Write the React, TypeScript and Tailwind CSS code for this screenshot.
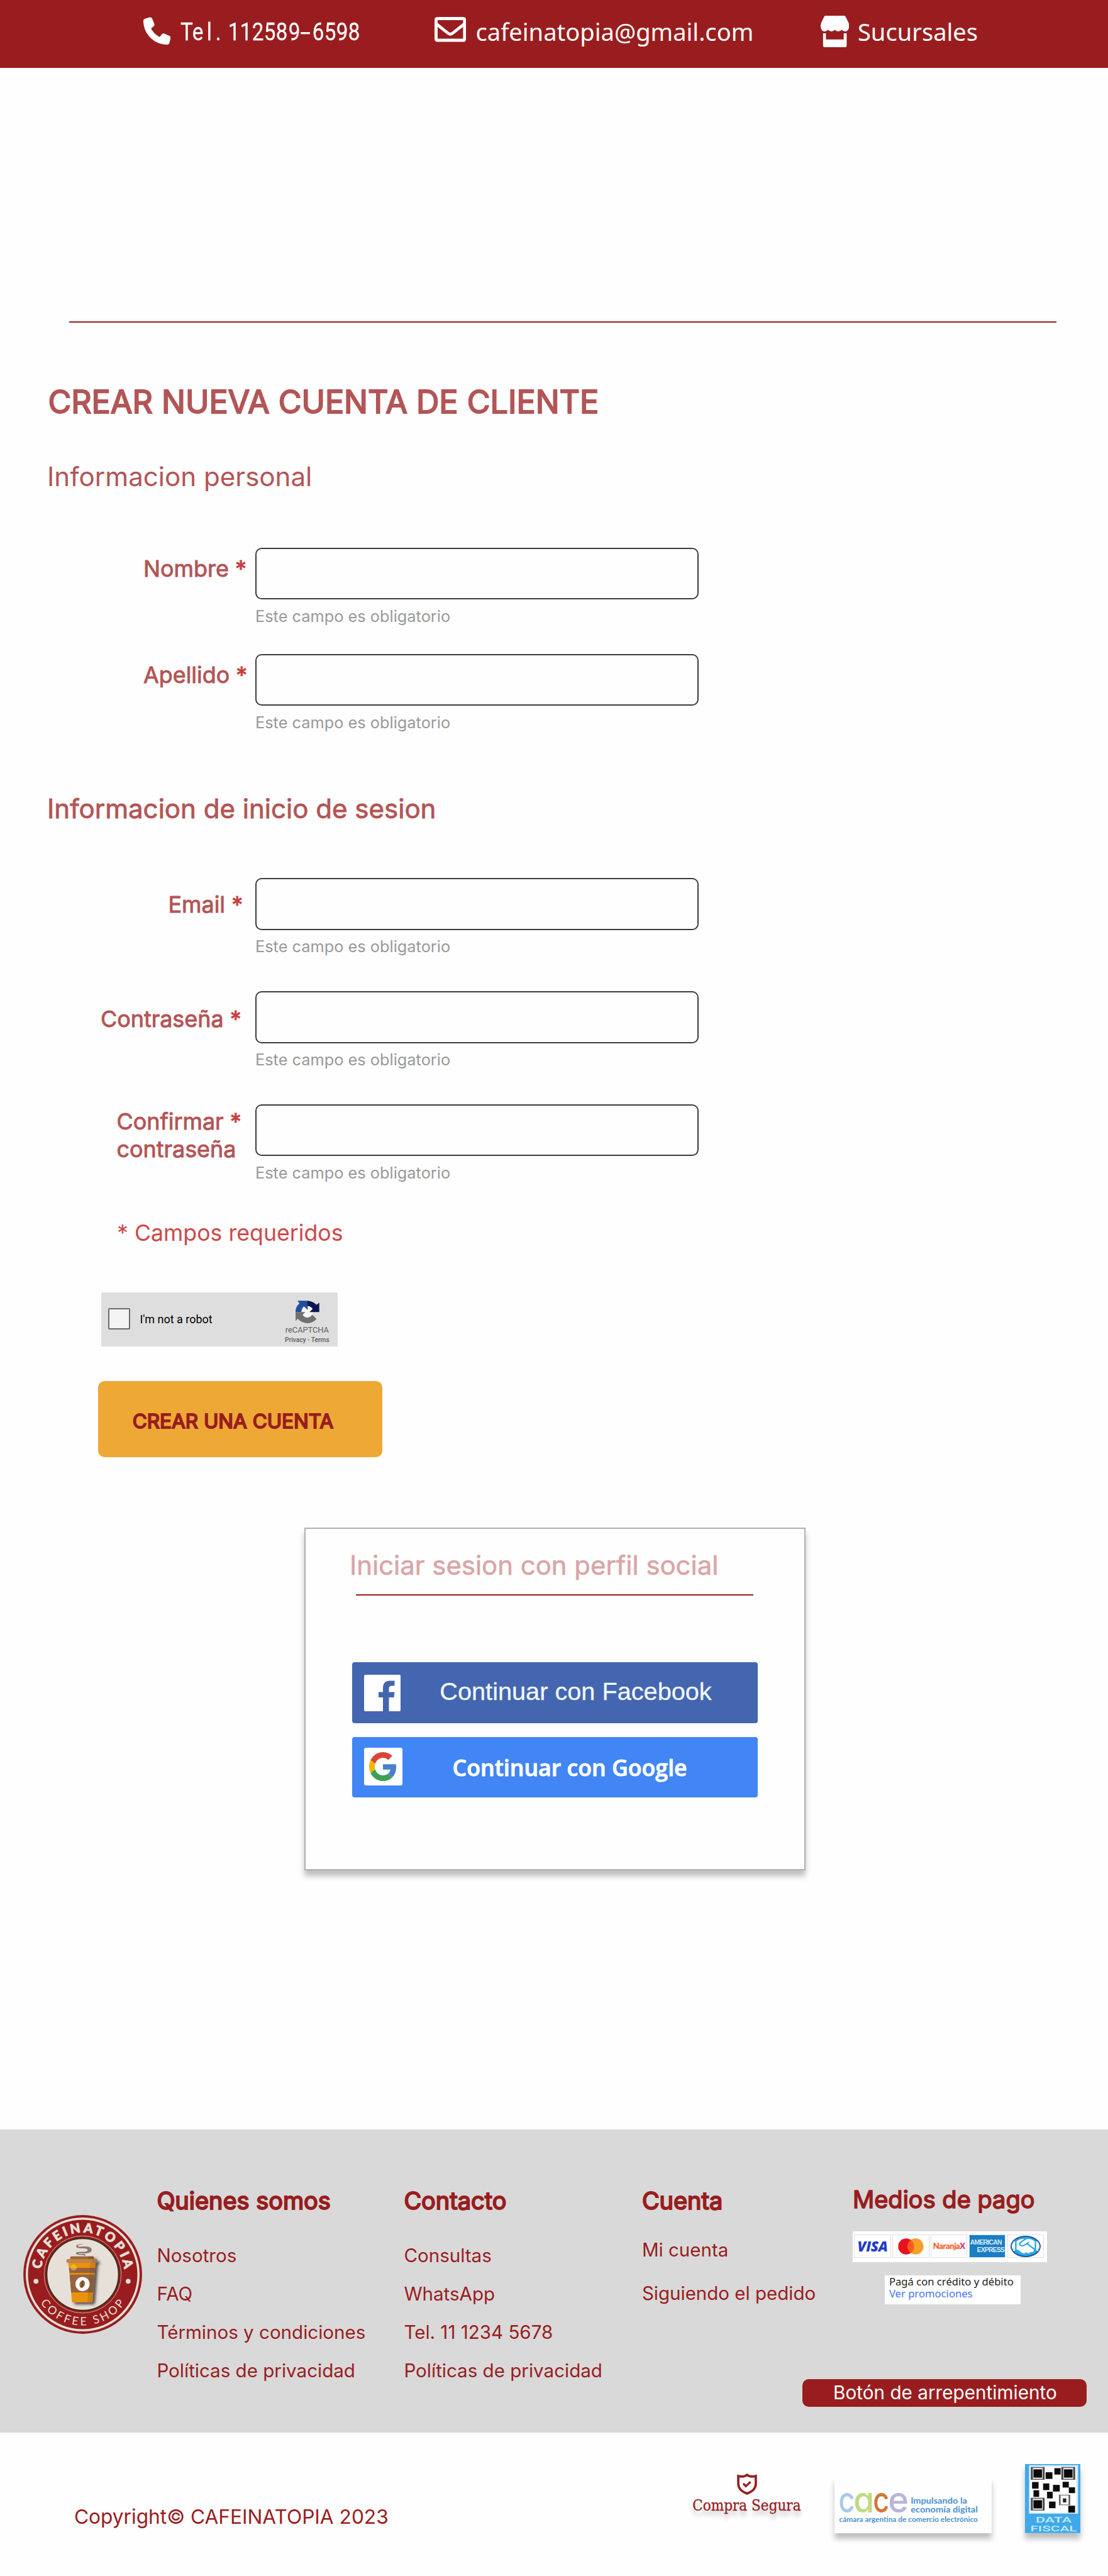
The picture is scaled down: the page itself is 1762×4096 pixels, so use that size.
import type { ReactNode } from 'react';
import { FaPhone, FaHandshake } from 'react-icons/fa6';

const PHONE = 'Tel.112589-6598';

function MailIcon() {
  return (
    <svg viewBox="0 0 95 75" className="h-[39.6px] w-[50.2px]" fill="white">
      <path
        fillRule="evenodd"
        d="M9 0H86Q95 0 95 9V66Q95 75 86 75H9Q0 75 0 66V9Q0 0 9 0ZM9.3 9.5V18L42 44.5Q47.5 49 53 44.5L86 18V9.5ZM9.3 30V65.5H86V30L55.5 53.5Q47.5 59 39.5 53.5Z"
      />
    </svg>
  );
}

function StoreIcon() {
  return (
    <svg viewBox="0 0 86 95" className="h-[50.2px] w-[45.4px]" fill="white">
      <path d="M15 0H71Q73.500 0 75 2.500L83 18.500Q86 24.500 86 31C86 41 80 47.500 73.500 47.500Q67.500 47.500 63.300 42Q59 47.500 53 47.500Q47 47.500 42.700 42Q38.500 47.500 32.500 47.500Q26.500 47.500 22.700 42Q18 47.500 12.500 47.500C5.500 47.500 0 41 0 31Q0 24.500 3 18.500L11 2.500Q12.500 0 15 0Z" />
      <path d="M7.300 52.300Q11.500 53.500 16 52.500V71.300H69.500V52.500Q74 53.500 78.500 52.300V90Q78.500 95 73.500 95H12.300Q7.300 95 7.300 90Z" />
    </svg>
  );
}

function Header() {
  return (
    <header className="flex h-[108px] bg-[#991D1E] text-white">
      <FaPhone className="mt-[27px] ml-[227.600px] h-[44.500px] w-[43.500px] shrink-0" />
      <p className="mt-[28px] ml-[14px] flex w-[286px] font-['Roboto'] text-[39.500px] leading-[46px] [-webkit-text-stroke:0.300px_white]">
        {PHONE.split('').map((c, i) => (
          <span key={i} className={c === '.' ? 'w-[19.050px] pr-[9px] text-center' : 'w-[19.050px] text-center'}>
            <span className={c === '-' ? 'inline-block scale-x-[1.500]' : 'inline-block origin-center scale-x-[0.840]'}>{c}</span>
          </span>
        ))}
      </p>
      <div className="mt-[27px] ml-[119.800px]">
        <MailIcon />
      </div>
      <p className="mt-[23px] ml-[15.500px] w-[442px] font-['Noto_Sans'] text-[38.100px] leading-[54px] whitespace-nowrap">cafeinatopia@gmail.com</p>
      <div className="mt-[24.800px] ml-[106px]">
        <StoreIcon />
      </div>
      <p className="mt-[23px] ml-[14px] font-['Noto_Sans'] text-[38.100px] leading-[54px]">Sucursales</p>
    </header>
  );
}

function Field({ label }: { label: ReactNode }) {
  return (
    <div className="flex h-[124px]">
      <div className="w-[406px] shrink-0 text-[35.900px] leading-[44px] whitespace-nowrap text-[#B35556] [-webkit-text-stroke:0.900px_#B35556]">{label}</div>
      <div>
        <div className="h-[82.500px] w-[705px] rounded-[10px] border-2 border-[#3C3C3C]" />
        <p className="mt-[11.500px] text-[25.350px] leading-[30px] text-[#999999]">Este campo es obligatorio</p>
      </div>
    </div>
  );
}

function Star() {
  return <span className="text-[#C74041] [-webkit-text-stroke:0.900px_#C74041]">*</span>;
}

function RecaptchaLogo() {
  return (
    <svg viewBox="1000 578 117 132" preserveAspectRatio="none" className="h-[37.800px] w-[39.400px]">
      <path fill="#fff" d="M1035 612L1084 612L1084 665Q1058 692 1035 665Z" opacity="0.7" />
      <path fill="#1F4F9E" d="M1012 582H1060V634L1043 614Q1031 626 1030 645H1003Q1003 612 1022 598Z" />
      <path fill="#0C1650" d="M1059 582Q1086 584 1102 605L1115 593V645H1069L1084 628Q1074 612 1059 611Z" />
      <path fill="#717171" d="M1003 645H1049L1036 661Q1058 692 1082 660L1102 684Q1085 708 1057 707Q1032 706 1014 683L1003 694Z" />
    </svg>
  );
}

function GoogleG() {
  return (
    <svg viewBox="0 0 48 48" preserveAspectRatio="none" className="h-[46px] w-[44px]">
      <path fill="#DB4437" d="M24 9.500c3.540 0 6.710 1.220 9.210 3.600l6.850-6.850C35.900 2.380 30.470 0 24 0 14.620 0 6.510 5.380 2.560 13.220l7.980 6.190C12.430 13.720 17.740 9.500 24 9.500z" />
      <path fill="#4A7FD0" d="M46.980 24.550c0-1.570-.15-3.090-.38-4.550H24v9.020h12.940c-.58 2.960-2.260 5.480-4.780 7.180l7.730 6c4.510-4.180 7.090-10.360 7.090-17.650z" />
      <path fill="#F4B400" d="M10.530 28.590c-.48-1.450-.76-2.990-.76-4.590s.27-3.140.76-4.590l-7.980-6.190C.92 16.460 0 20.120 0 24c0 3.880.92 7.540 2.560 10.780l7.970-6.190z" />
      <path fill="#3DA152" d="M24 48c6.480 0 11.930-2.130 15.890-5.810l-7.730-6c-2.150 1.450-4.920 2.300-8.160 2.300-6.260 0-11.570-4.220-13.470-9.910l-7.980 6.190C6.510 42.620 14.620 48 24 48z" />
    </svg>
  );
}

function SocialCard() {
  return (
    <section className="mt-[112px] ml-[483.500px] h-[545px] w-[797px] border-2 border-[#B8ADAD] bg-[#fefefe] shadow-[0_8.500px_8.500px_rgba(0,0,0,0.25)]">
      <h2 className="mt-[33.200px] ml-[70.500px] text-[41.900px] leading-[50px] whitespace-nowrap text-[#D9A6A6] [-webkit-text-stroke:0.600px_#D9A6A6]">Iniciar sesion con perfil social</h2>
      <div className="mt-[20.800px] ml-[80.600px] h-[2px] w-[631.700px] bg-[#991D1E]" />
      <button className="mt-[106px] ml-[74.500px] flex h-[97px] w-[644.600px] rounded-[4px] bg-[#4466B0]">
        <svg viewBox="0 0 58 58" className="mt-[20px] ml-[19.300px] h-[58px] w-[58px]">
          <rect width="58" height="58" rx="2" fill="white" />
          <path fill="#4466B0" d="M30 58V36H23V27.500H30V21Q30 9.500 41 9.500H48.500V17.500H44Q39.500 17.500 39.500 22V27.500H48.500L47.500 36H39.500V58Z" />
        </svg>
        <span className="mt-[21px] ml-[62px] font-['Liberation_Sans'] text-[39.700px] leading-[50px] whitespace-nowrap text-[#F1F7FF] [-webkit-text-stroke:0.300px_#F1F7FF]">Continuar con Facebook</span>
      </button>
      <button className="mt-[21.500px] ml-[74.500px] flex h-[96.500px] w-[644.600px] rounded-[4px] bg-[#4285F4]">
        <span className="mt-[17px] ml-[19.300px] flex h-[60.500px] w-[60.300px] items-center justify-center rounded-[3px] bg-white">
          <GoogleG />
        </span>
        <span className="mt-[23.500px] ml-[80px] font-['Open_Sans'] text-[35.700px] leading-[50px] font-semibold whitespace-nowrap text-white [-webkit-text-stroke:0.900px_white]">Continuar con Google</span>
      </button>
    </section>
  );
}

function Logo() {
  return (
    <svg viewBox="59 59 1075 1075" className="mt-[136px] ml-[36.800px] h-[189px] w-[189px] shrink-0">
      <defs>
        <path id="arcTop" d="M220.300 550.300A379 379 0 0 1 972.700 550.300" />
        <path id="arcBottom" d="M212.900 851.400A460 460 0 0 0 980.100 851.400" />
        <filter id="cupShadow" x="-30%" y="-20%" width="180%" height="150%">
          <feDropShadow dx="22" dy="18" stdDeviation="13" floodColor="#3a3638" floodOpacity="0.85" />
        </filter>
        <clipPath id="cupBody">
          <path d="M468 480H714L686 838Q685 850 674 850H510Q500 850 499 838Z" />
        </clipPath>
      </defs>
      <circle cx="596.500" cy="596.500" r="537" fill="#991D1E" />
      <circle cx="596.500" cy="596.500" r="505" fill="none" stroke="#E6E0D8" strokeWidth="20" />
      <circle cx="596.500" cy="596.500" r="349" fill="none" stroke="#E6E0D8" strokeWidth="4" />
      <circle cx="596.500" cy="596.500" r="326" fill="#E6E0D8" stroke="#452A1A" strokeWidth="13" />
      <g fontFamily="Lato, sans-serif" fill="#E6E0D8">
        <text fontSize="117" fontWeight="900" stroke="#E6E0D8" strokeWidth="5">
          <textPath href="#arcTop" textLength="1096">CAFEINATOPIA</textPath>
        </text>
        <text fontSize="103" fontWeight="400">
          <textPath href="#arcBottom" textLength="900">COFFEE SHOP</textPath>
        </text>
      </g>
      <circle cx="174" cy="658" r="22" fill="#E6E0D8" />
      <circle cx="1008" cy="658" r="22" fill="#E6E0D8" />
      <path fill="#8F766E" d="M608 323Q552 326 552 342Q554 348 600 344Q678 342 679 374Q676 406 604 407Q556 404 554 406Q560 411 602 412Q624 412 622 424L613 430Q612 420 590 420Q534 420 534 405Q536 392 590 392Q642 392 642 376Q640 360 600 360Q538 362 537 344Q540 318 608 323Z" />
      <g filter="url(#cupShadow)">
        <path d="M484 462V442Q484 433 494 433H687Q697 433 697 442V462Z" fill="#9C663B" />
        <path d="M468 480H714L686 838Q685 850 674 850H510Q500 850 499 838Z" fill="#E9920B" />
        <rect x="450" y="459" width="280" height="30" rx="15" fill="#C0834B" />
      </g>
      <g clipPath="url(#cupBody)">
        <rect x="460" y="537" width="260" height="46" fill="#97623D" />
        <rect x="460" y="598" width="260" height="161" fill="#97623D" />
        <path d="M667 489H720V850H638Z" fill="#5a4430" opacity="0.180" />
      </g>
      <path d="M650 433H687Q697 433 697 442V460H650Z" fill="#8A5935" />
      <rect x="450" y="459" width="280" height="30" rx="15" fill="#AE7546" />
      <rect x="450" y="459" width="235" height="30" rx="15" fill="#C0834B" />
      <path d="M486 537A28 31 0 0 1 542 537Z" fill="#F3BB0F" />
      <path d="M486 537A28 24 0 0 0 542 537Z" fill="#C29A74" />
      <circle cx="595" cy="683" r="64" fill="white" />
      <ellipse cx="592" cy="684" rx="24" ry="34" transform="rotate(15 592 684)" fill="#97623D" />
      <path d="M601 653Q586 672 592 686Q597 700 578 714" fill="none" stroke="#5C3A22" strokeWidth="7" />
    </svg>
  );
}

function LinkColumn({ title, links, className }: { title: string; links: string[]; className: string }) {
  return (
    <div className={className}>
      <h3 className="text-[37.900px] leading-[46px] [-webkit-text-stroke:2px_#991D1E]">{title}</h3>
      <ul className="mt-[33.600px] text-[29.550px] leading-[61px] whitespace-nowrap">
        {links.map((l) => (
          <li key={l}>{l}</li>
        ))}
      </ul>
    </div>
  );
}

const TILE = 'flex h-[37px] w-[58.500px] shrink-0 items-center justify-center overflow-hidden border border-[#DDDDDD] bg-white';

function PaymentCards() {
  return (
    <div className="mt-[27.600px] ml-[0.500px] flex h-[49px] w-[308.500px] gap-[2.300px] bg-white pt-[5.500px] pl-[2px]">
      <div className={TILE}>
        <span className="font-['Open_Sans'] text-[22.500px] leading-none font-extrabold tracking-[-0.300px] text-[#1F3CC8] italic">VISA</span>
      </div>
      <div className={TILE}>
        <svg viewBox="0 0 41 26" className="h-[26px] w-[41px]">
          <circle cx="13" cy="13" r="12.700" fill="#E8121F" />
          <circle cx="28" cy="13" r="12.700" fill="#F59F2C" />
          <path d="M20.500 2.700A12.700 12.700 0 0 1 20.500 23.300A12.700 12.700 0 0 1 20.500 2.700Z" fill="#FB5B17" />
        </svg>
      </div>
      <div className={TILE}>
        <span className="font-['Lato'] text-[13px] leading-none font-black tracking-[-0.400px] whitespace-nowrap text-[#FA5A1E]">
          Naranja<span className="text-[#E0306A]">X</span>
        </span>
      </div>
      <div className="flex h-[37px] w-[58.500px] shrink-0 flex-col justify-center overflow-hidden border border-[#cfe3f3] bg-[#1B7DC4] font-['Liberation_Sans'] text-[10.300px] leading-[12px] font-bold tracking-[-0.700px] text-[#D6EBF8]">
        <span className="pl-[1px]">AMERICAN</span>
        <span className="pr-[1px] text-right">EXPRESS</span>
      </div>
      <div className={TILE}>
        <span className="flex h-[34px] w-[48px] items-center justify-center overflow-hidden rounded-[50%] border-2 border-[#24559C] bg-[#29A9E8]">
          <FaHandshake className="h-[31px] w-[48px] shrink-0 text-white" preserveAspectRatio="none" />
        </span>
      </div>
    </div>
  );
}

function Footer() {
  return (
    <footer className="mt-[412px] flex h-[481.500px] bg-[#D9D9D9] text-[#991D1E]">
      <Logo />
      <LinkColumn className="ml-[23.600px] w-[393px] shrink-0 pt-[89.900px]" title="Quienes somos" links={['Nosotros', 'FAQ', 'Términos y condiciones', 'Políticas de privacidad']} />
      <LinkColumn className="w-[378.500px] shrink-0 pt-[89.900px]" title="Contacto" links={['Consultas', 'WhatsApp', 'Tel. 11 1234 5678', 'Políticas de privacidad']} />
      <div className="w-[335px] shrink-0 pt-[89.900px]">
        <h3 className="text-[37.900px] leading-[46px] [-webkit-text-stroke:2px_#991D1E]">Cuenta</h3>
        <ul className="mt-[24.600px] flex flex-col gap-[8.700px] text-[29.500px] leading-[61px] whitespace-nowrap">
          <li>Mi cuenta</li>
          <li>Siguiendo el pedido</li>
        </ul>
      </div>
      <div className="pt-[88.200px]">
        <h3 className="text-[38px] leading-[46px] [-webkit-text-stroke:1.600px_#991D1E]">Medios de pago</h3>
        <PaymentCards />
        <div className="mt-[21px] ml-[51.500px] h-[46.500px] w-[215.500px] bg-white pt-[1px] pl-[6.500px] font-['Noto_Sans'] text-[16.650px] leading-[18.600px] whitespace-nowrap text-[#222]">
          <p>Pagá con crédito y débito</p>
          <p className="text-[#4474F2]">Ver promociones</p>
        </div>
        <button className="mt-[118.500px] -ml-[80px] flex h-[44.500px] w-[452px] items-center justify-center rounded-[10px] bg-[#991D1E] pb-[1px] pl-[2px] text-[29.700px] whitespace-nowrap text-white">Botón de arrepentimiento</button>
      </div>
    </footer>
  );
}

const QR_SOLID = [
  [1345, 284, 24, 60], [1376, 247, 22, 58], [1297, 372, 23, 60], [1336, 385, 22, 60], [1405, 370, 22, 52],
  [1371, 398, 24, 60], [1427, 420, 22, 52], [1302, 446, 20, 60], [1350, 460, 20, 60], [1357, 548, 23, 60], [1425, 586, 24, 62],
];
const QR_FINDERS = [[1293, 232], [1401, 232], [1293, 510]];

function DataFiscal() {
  return (
    <div className="mt-[50.500px] ml-[53px] h-[109.800px] w-[88.600px] shrink-0 shadow-[0_8.500px_8.500px_rgba(0,0,0,0.25)]">
      <svg viewBox="1272 210 197 623" preserveAspectRatio="none" className="h-full w-full">
        <rect x="1272" y="210" width="197" height="623" fill="#41A9E9" />
        <rect x="1286" y="220" width="174" height="438" fill="#C9EBF9" />
        <rect x="1290" y="232" width="164" height="416" fill="white" />
        {QR_FINDERS.map(([x, y]) => (
          <g key={`${x}-${y}`}>
            <rect x={x + 3} y={y + 8} width="42" height="108" fill="#E4E4E4" stroke="#4a4a4a" strokeWidth="7" />
            <rect x={x + 9} y={y + 26} width="30" height="74" fill="#0a0a0a" />
          </g>
        ))}
        {QR_SOLID.map(([x, y, w, h]) => (
          <rect key={`${x}-${y}`} x={x} y={y} width={w} height={h} fill="#0c0c0c" />
        ))}
        <rect x="1395" y="490" width="34" height="88" fill="white" stroke="#666" strokeWidth="6" />
        <rect x="1406" y="520" width="12" height="36" fill="#222" />
        <g transform="translate(1272 0) scale(2.223 5.674)" fill="#C4E9FA" fontFamily="Roboto, sans-serif" fontSize="13.500" fontWeight="500">
          <text x="17" y="129.800" textLength="57" lengthAdjust="spacingAndGlyphs">DATA</text>
          <text x="8.500" y="144" textLength="74" lengthAdjust="spacingAndGlyphs">FISCAL</text>
        </g>
      </svg>
    </div>
  );
}

function Cace() {
  return (
    <div className="mt-[71.500px] ml-[53.600px] h-[88.800px] w-[249.300px] shrink-0 bg-[#fefefe] shadow-[0_8.500px_8.500px_rgba(0,0,0,0.25)]">
      <svg viewBox="0 0 249 89" className="h-full w-full">
        <text y="56.500" fontFamily="Inter, sans-serif" fontSize="57" fontWeight="500" style={{ fontFeatureSettings: '"cv11"' }}>
          <tspan x="6" fill="#A9C9EA" textLength="26" lengthAdjust="spacingAndGlyphs">c</tspan>
          <tspan x="30" fill="#BFDA80" textLength="33" lengthAdjust="spacingAndGlyphs">a</tspan>
          <tspan x="61" fill="#D2763A" textLength="26" lengthAdjust="spacingAndGlyphs">c</tspan>
          <tspan x="85" fill="#B8B4DC" textLength="33" lengthAdjust="spacingAndGlyphs">e</tspan>
        </text>
        <g fontFamily="Lato, sans-serif" fontWeight="700" fill="#4A92D0">
          <text x="121" y="42" fontSize="14" textLength="90" lengthAdjust="spacingAndGlyphs">Impulsando la</text>
          <text x="121" y="56.500" fontSize="14" textLength="107" lengthAdjust="spacingAndGlyphs">economía digital</text>
          <text x="7" y="71" fontSize="12" textLength="221" lengthAdjust="spacingAndGlyphs">cámara argentina de comercio electrónico</text>
        </g>
      </svg>
    </div>
  );
}

function BottomBar() {
  return (
    <div className="flex h-[227.500px] text-[#991D1E]">
      <p className="mt-[114.200px] ml-[118px] w-[983px] shrink-0 text-[31.650px] leading-[40px]">Copyright© CAFEINATOPIA 2023</p>
      <div className="flex w-[172.800px] shrink-0 flex-col items-center pt-[65.500px]">
        <svg viewBox="0 0 61 64" className="ml-[2px] h-[34px] w-[32px]" preserveAspectRatio="none" fill="none" stroke="#991D1E">
          <path d="M30.500 4Q21 12 4 7.500V32Q5 51 30.500 60Q56 51 57 32V7.500Q40 12 30.500 4Z" strokeWidth="7" />
          <path d="M19 30L27 38L41 25" strokeWidth="6.500" />
        </svg>
        <p className="mt-[1.500px] font-['DejaVu_Serif_Condensed'] text-[24px] leading-[30px] whitespace-nowrap [-webkit-text-stroke:0.300px_#991D1E] [text-shadow:0_8px_6px_rgba(0,0,0,0.25)]">Compra Segura</p>
      </div>
      <Cace />
      <DataFiscal />
    </div>
  );
}

export default function App() {
  return (
    <div className="h-[4096px] w-[1762px] overflow-hidden bg-[#FEFEFE] font-['Inter',sans-serif]">
      <Header />
      <main>
        <div className="mt-[403px] ml-[110px] h-[2px] w-[1570px] bg-[#991D1E]" />
        <h1 className="mt-[96px] ml-[76.500px] text-[50.300px] leading-[60px] whitespace-nowrap text-[#B35556] [-webkit-text-stroke:2px_#B35556]">CREAR NUEVA CUENTA DE CLIENTE</h1>
        <h2 className="mt-[63.500px] ml-[75px] text-[42.100px] leading-[50px] text-[#B35556]">Informacion personal</h2>
        <div className="mt-[88px] flex flex-col gap-[45px]">
          <Field label={<p className="mt-[11px] ml-[228px]">Nombre <Star /></p>} />
          <Field label={<p className="mt-[11px] ml-[228px]">Apellido <Star /></p>} />
        </div>
        <h2 className="mt-[97.200px] ml-[75px] text-[42.050px] leading-[50px] text-[#B35556] [-webkit-text-stroke:0.800px_#B35556]">Informacion de inicio de sesion</h2>
        <div className="mt-[85.800px] flex flex-col gap-[55.600px]">
          <Field label={<p className="mt-[20px] ml-[267.500px]">Email <Star /></p>} />
          <Field label={<p className="mt-[22.400px] ml-[160px]">Contraseña <Star /></p>} />
          <Field label={<p className="mt-[5.500px] ml-[185.500px]">Confirmar <Star /><br />contraseña</p>} />
        </div>
        <p className="mt-[58px] ml-[186px] text-[35.700px] leading-[44px] text-[#CF4848]">* Campos requeridos</p>
        <div className="mt-[73.500px] ml-[160.700px] flex h-[86px] w-[376px] bg-[#DEDEDE] font-['Roboto'] text-[#5c5c5c]">
          <div className="mt-[25px] ml-[11px] h-[33.500px] w-[35.700px] shrink-0 rounded-[2px] border-[2.500px] border-[#6B6B6B] bg-[#F4F4F4]" />
          <p className="mt-[32.500px] ml-[15px] w-[200px] text-[18px] leading-[20px] text-black">I'm not a robot</p>
          <div className="mt-[11.500px] ml-[29px] flex w-[74px] flex-col items-center whitespace-nowrap">
            <RecaptchaLogo />
            <span className="mt-[4px] text-[12.800px] leading-[14px]">reCAPTCHA</span>
            <span className="mt-[2.500px] text-[10.200px] leading-[12px] font-medium">Privacy - Terms</span>
          </div>
        </div>
        <button className="mt-[55px] ml-[156.300px] flex h-[121px] w-[452px] rounded-[10px] bg-[#EEA836] pt-[41.500px] pl-[54.500px] text-[31.500px] leading-[44px] whitespace-nowrap text-[#991D1E] [-webkit-text-stroke:2px_#991D1E]">CREAR UNA CUENTA</button>
        <SocialCard />
      </main>
      <Footer />
      <BottomBar />
    </div>
  );
}
